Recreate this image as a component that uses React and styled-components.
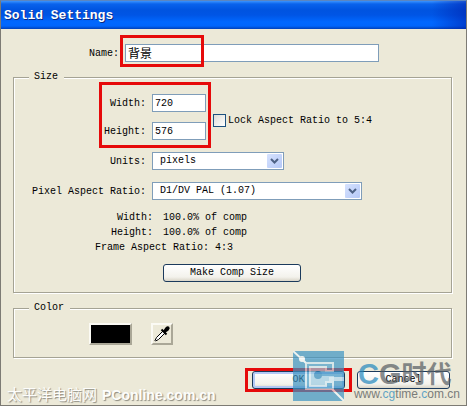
//#region Imports
import {useState} from 'react'
import styled, {createGlobalStyle} from 'styled-components'
//#endregion

//#region Global
const GlobalStyle=createGlobalStyle`
*{box-sizing:border-box;}
body{
margin:0;
background:#ece9d8;
color:#000;
font:10px/12px "Liberation Mono","Noto Sans CJK SC",monospace;
}
button,input,select{
font:inherit;
color:inherit;
margin:0;
}
`
//#endregion

//#region Styled Window
const Window=styled.main`
position:relative;
width:100%;
border:1px solid #7d7b74;
border-top-color:#5c86c0;
background:#ece9d8;
overflow:hidden;
`

const TitleBar=styled.header`
display:flex;
align-items:center;
height:28px;
padding:2px 3px 0;
background:
linear-gradient(to right,transparent calc(100% - 34px),rgba(0,30,170,.55)),
linear-gradient(to bottom,#3a93ff 0,#0a63ec 3px,#0054e0 9px,#0055e5 14px,#0068ff 21px,#0066fc 25px,#0040b8 28px);
`

const Title=styled.h1`
margin:0;
font-size:13px;
line-height:16px;
font-weight:bold;
color:#fff;
text-shadow:1px 1px 0 #0a2a80;
`

const Body=styled.form`
padding:15px 14px 16px 12px;
`
//#endregion

//#region Styled Form
const Row=styled.div`
display:flex;
align-items:center;
gap:${(props)=>(props.$Gap?props.$Gap:'6px')};
padding-left:${(props)=>(props.$Left?props.$Left:'0')};
`

const Label=styled.label`
flex:none;
width:${(props)=>(props.$Width?props.$Width:'132px')};
padding-top:2px;
text-align:right;
white-space:pre;
`

const TextBox=styled.input`
display:block;
width:100%;
height:18px;
padding:0 2px;
border:1px solid #7f9db9;
border-radius:0;
background:#fff;
outline:none;
font-size:${(props)=>(props.$Large?'12px':'10px')};
`

const Field=styled.div`
position:relative;
width:${(props)=>props.$Width};
`

const Group=styled.fieldset`
min-width:0;
margin:${(props)=>props.$Top} 0 0;
padding:${(props)=>props.$Padding};
border:1px solid #a5a394;
box-shadow:1px 1px 0 #fff,inset 1px 1px 0 #fff;
`

const Legend=styled.legend`
position:relative;
margin-left:15px;
padding:0 6px 0 5px;
background:#ece9d8;
`

const Stack=styled.div`
position:relative;
display:flex;
flex-direction:column;
gap:${(props)=>(props.$Gap?props.$Gap:'0')};
`

const SelectBox=styled.select`
display:block;
width:100%;
height:18px;
padding:0 20px 0 7px;
border:1px solid #7f9db9;
border-radius:0;
background:#fff;
appearance:none;
outline:none;
`

const Arrow=styled.svg`
position:absolute;
top:2px;
right:2px;
width:15px;
height:14px;
border-radius:1px;
background:linear-gradient(135deg,#d6e2fe,#b5c8f7);
pointer-events:none;
`

const CheckLabel=styled.label`
display:flex;
align-items:center;
gap:2px;
padding-top:7px;
white-space:nowrap;
`

const CheckBox=styled.input`
flex:none;
width:13px;
height:13px;
border:1px solid #1c5180;
background:linear-gradient(135deg,#dcdcd7,#fff);
appearance:none;
&:checked{
background:#21a121;
box-shadow:inset 0 0 0 2px #fff;
}
`

const Info=styled.dl`
margin:10px 0 9px;
line-height:15px;
`

const InfoRow=styled.div`
display:flex;
gap:${(props)=>(props.$Wide?'6px':'10px')};
dt{
flex:none;
width:${(props)=>(props.$Wide?'195px':'139px')};
text-align:right;
}
dd{margin:0;}
`

const PushButton=styled.button`
display:block;
width:${(props)=>props.$Width};
height:18px;
margin-left:${(props)=>(props.$Left?props.$Left:'0')};
padding:0;
border:1px solid #1b3a5c;
border-radius:3px;
background:linear-gradient(to bottom,#fff,#f3f2ec 75%,#d9d5c8);
box-shadow:${(props)=>(props.$Default?'inset 0 0 0 2px #b3c8f5':'none')};
`

const Footer=styled.footer`
display:flex;
justify-content:flex-end;
gap:12px;
margin-top:13px;
padding-right:2px;
`
//#endregion

//#region Styled Color
const Bevel=styled.button`
display:flex;
align-items:center;
justify-content:center;
width:${(props)=>props.$Width};
height:22px;
padding:0;
border:2px solid;
border-color:#fbfaf4 #aaa797 #aaa797 #fbfaf4;
background:${(props)=>(props.$Color?props.$Color:'#ece9d8')};
`
//#endregion

//#region Styled Overlays
const Marker=styled.span`
position:absolute;
inset:${(props)=>props.$Inset};
width:${(props)=>(props.$Width?props.$Width:'auto')};
border:3px solid #e60a0a;
pointer-events:none;
`

const SiteMark=styled.p`
position:absolute;
left:6px;
bottom:1px;
display:flex;
align-items:center;
gap:5px;
margin:0;
font:bold 14px/18px "Liberation Sans","Noto Sans CJK SC",sans-serif;
color:#fdfdfb;
text-shadow:1px 1px 1px #8d8b80;
pointer-events:none;
span{
font-size:15px;
font-weight:normal;
}
`

const Brand=styled.div`
position:absolute;
right:6px;
bottom:4px;
display:flex;
gap:10px;
opacity:.7;
font-family:"Liberation Sans","Noto Sans CJK SC",sans-serif;
pointer-events:none;
`

const BrandText=styled.div`
display:flex;
flex-direction:column;
justify-content:flex-end;
white-space:nowrap;
`

const BrandName=styled.strong`
display:flex;
align-items:center;
padding-left:4px;
font-size:29px;
line-height:28px;
color:#565d62;
i{
font-style:normal;
color:#2387bd;
}
span{font-size:25px;}
`

const BrandUrl=styled.span`
font-size:12px;
line-height:13px;
color:#4a4e52;
i{
font-style:normal;
color:#2387bd;
}
`
//#endregion

//#region SVG
const ArrowSVG=()=>(
    <Arrow viewBox='0 0 15 14' aria-hidden='true'>
        <path d='M4 5L7.5 8.5L11 5' fill='none' stroke='#4d6185' strokeWidth='2'/>
    </Arrow>
)

const DropperSVG=()=>(
    <svg width='18' height='18' viewBox='0 0 18 18' aria-hidden='true'>
        <path d='M10 6L3.5 12.5L2 15.5L2.5 16L5.5 14.5L12 8' fill='#fff' stroke='#000'/>
        <path d='M8.5 4.5L13.5 9.5' stroke='#000' strokeWidth='2'/>
        <path d='M10 6L12.5 2.5Q14.5 .5 16.2 1.8Q17.5 3.5 15.5 5.5L12 8Z' fill='#000'/>
    </svg>
)

const LogoSVG=()=>(
    <svg width='51' height='50' viewBox='0 0 51 50' aria-hidden='true'>
        <path fillRule='evenodd' d='M0 0H51V50H0ZM12 11V39H41V30H32V34H18V17H32V21H41V11Z' fill='#3d94c4'/>
        <path fillRule='evenodd' d='M12 11H41V21H32V17H18V34H32V30H41V39H12ZM14 13V37H39V32H34V36H16V15H34V19H39V13Z' fill='#cfe6f0'/>
        <path d='M14 13H39V19H34V15H16V36H34V32H39V37H14Z' fill='#4b9fca'/>
        <path d='M18 17H32V21H41V30H32V34H18Z' fill='#9ccbe2'/>
        <path d='M26 23H41' stroke='#3d94c4' strokeWidth='4'/>
        <path d='M36 26H51V30H36Z' fill='#dcecf3' opacity='.7'/>
        <circle cx='25' cy='24' r='4' fill='#2c86b8'/>
        <path d='M0 0L13 12M39 38L51 50' stroke='#f0f7fa' strokeWidth='2'/>
        <circle cx='9' cy='8' r='3' fill='#f4fafc'/>
    </svg>
)
//#endregion

//#region Components
const Select=(props)=>(
    <Field $Width={props.Width}>
        <SelectBox id={props.Id} defaultValue={props.Options[0]}>
            {props.Options.map((element)=><option key={element}>{element}</option>)}
        </SelectBox>
        <ArrowSVG/>
    </Field>
)

const SizeGroup=()=>{
    const [width,setWidth]=useState('720')
    const [height,setHeight]=useState('576')

    return(
        <Group $Top='9px' $Padding='11px 0 10px'>
            <Legend>Size</Legend>
            <Stack $Gap='12px'>
                <Row $Gap='7px'>
                    <Stack $Gap='10px'>
                        <Row>
                            <Label htmlFor='width'>Width:</Label>
                            <Field $Width='54px'>
                                <TextBox id='width' value={width} onChange={(e)=>setWidth(e.target.value)}/>
                            </Field>
                        </Row>
                        <Row>
                            <Label htmlFor='height'>Height:</Label>
                            <Field $Width='54px'>
                                <TextBox id='height' value={height} onChange={(e)=>setHeight(e.target.value)}/>
                            </Field>
                        </Row>
                        <Marker $Inset='-12px -5px -8px 85px'/>
                    </Stack>
                    <CheckLabel>
                        <CheckBox type='checkbox'/>
                        Lock Aspect Ratio to 5:4
                    </CheckLabel>
                </Row>
                <Row>
                    <Label htmlFor='units'>Units:</Label>
                    <Select Id='units' Width='132px' Options={['pixels']}/>
                </Row>
                <Row>
                    <Label htmlFor='ratio'>Pixel Aspect Ratio:</Label>
                    <Select Id='ratio' Width='210px' Options={['D1/DV PAL (1.07)']}/>
                </Row>
            </Stack>
            <Info>
                <InfoRow><dt>Width:</dt><dd>100.0% of comp</dd></InfoRow>
                <InfoRow><dt>Height:</dt><dd>100.0% of comp</dd></InfoRow>
                <InfoRow $Wide><dt>Frame Aspect Ratio:</dt><dd>4:3</dd></InfoRow>
            </Info>
            <PushButton type='button' $Width='138px' $Left='149px'>Make Comp Size</PushButton>
        </Group>
    )
}

const ColorGroup=()=>(
    <Group $Top='9px' $Padding='9px 0 12px'>
        <Legend>Color</Legend>
        <Row $Gap='19px' $Left='75px'>
            <Bevel type='button' aria-label='Color' $Width='43px' $Color='#000'/>
            <Bevel type='button' aria-label='Eyedropper' $Width='22px'><DropperSVG/></Bevel>
        </Row>
    </Group>
)
//#endregion

const App=()=>{
    const [name,setName]=useState('背景')

    return(
        <>
        <GlobalStyle/>
        <Window>
            <TitleBar><Title>Solid Settings</Title></TitleBar>
            <Body onSubmit={(e)=>e.preventDefault()}>
                <Row>
                    <Label htmlFor='name' $Width='106px'>Name:</Label>
                    <Field $Width='254px'>
                        <TextBox id='name' $Large value={name} onChange={(e)=>setName(e.target.value)}/>
                        <Marker $Inset='-9px auto -5px -5px' $Width='84px'/>
                    </Field>
                </Row>
                <SizeGroup/>
                <ColorGroup/>
                <Footer>
                    <Field $Width='93px'>
                        <PushButton type='submit' $Width='100%' $Default>OK</PushButton>
                        <Marker $Inset='-3px -7px -3px -7px'/>
                    </Field>
                    <PushButton type='button' $Width='93px'>Cancel</PushButton>
                </Footer>
            </Body>
            <SiteMark><span>太平洋电脑网</span>PConline.com.cn</SiteMark>
            <Brand>
                <LogoSVG/>
                <BrandText>
                    <BrandName><i>C</i>G<span>时代</span></BrandName>
                    <BrandUrl>www.<i>cg</i>time.<i>c</i>om.cn</BrandUrl>
                </BrandText>
            </Brand>
        </Window>
        </>
    )
}

export default App
